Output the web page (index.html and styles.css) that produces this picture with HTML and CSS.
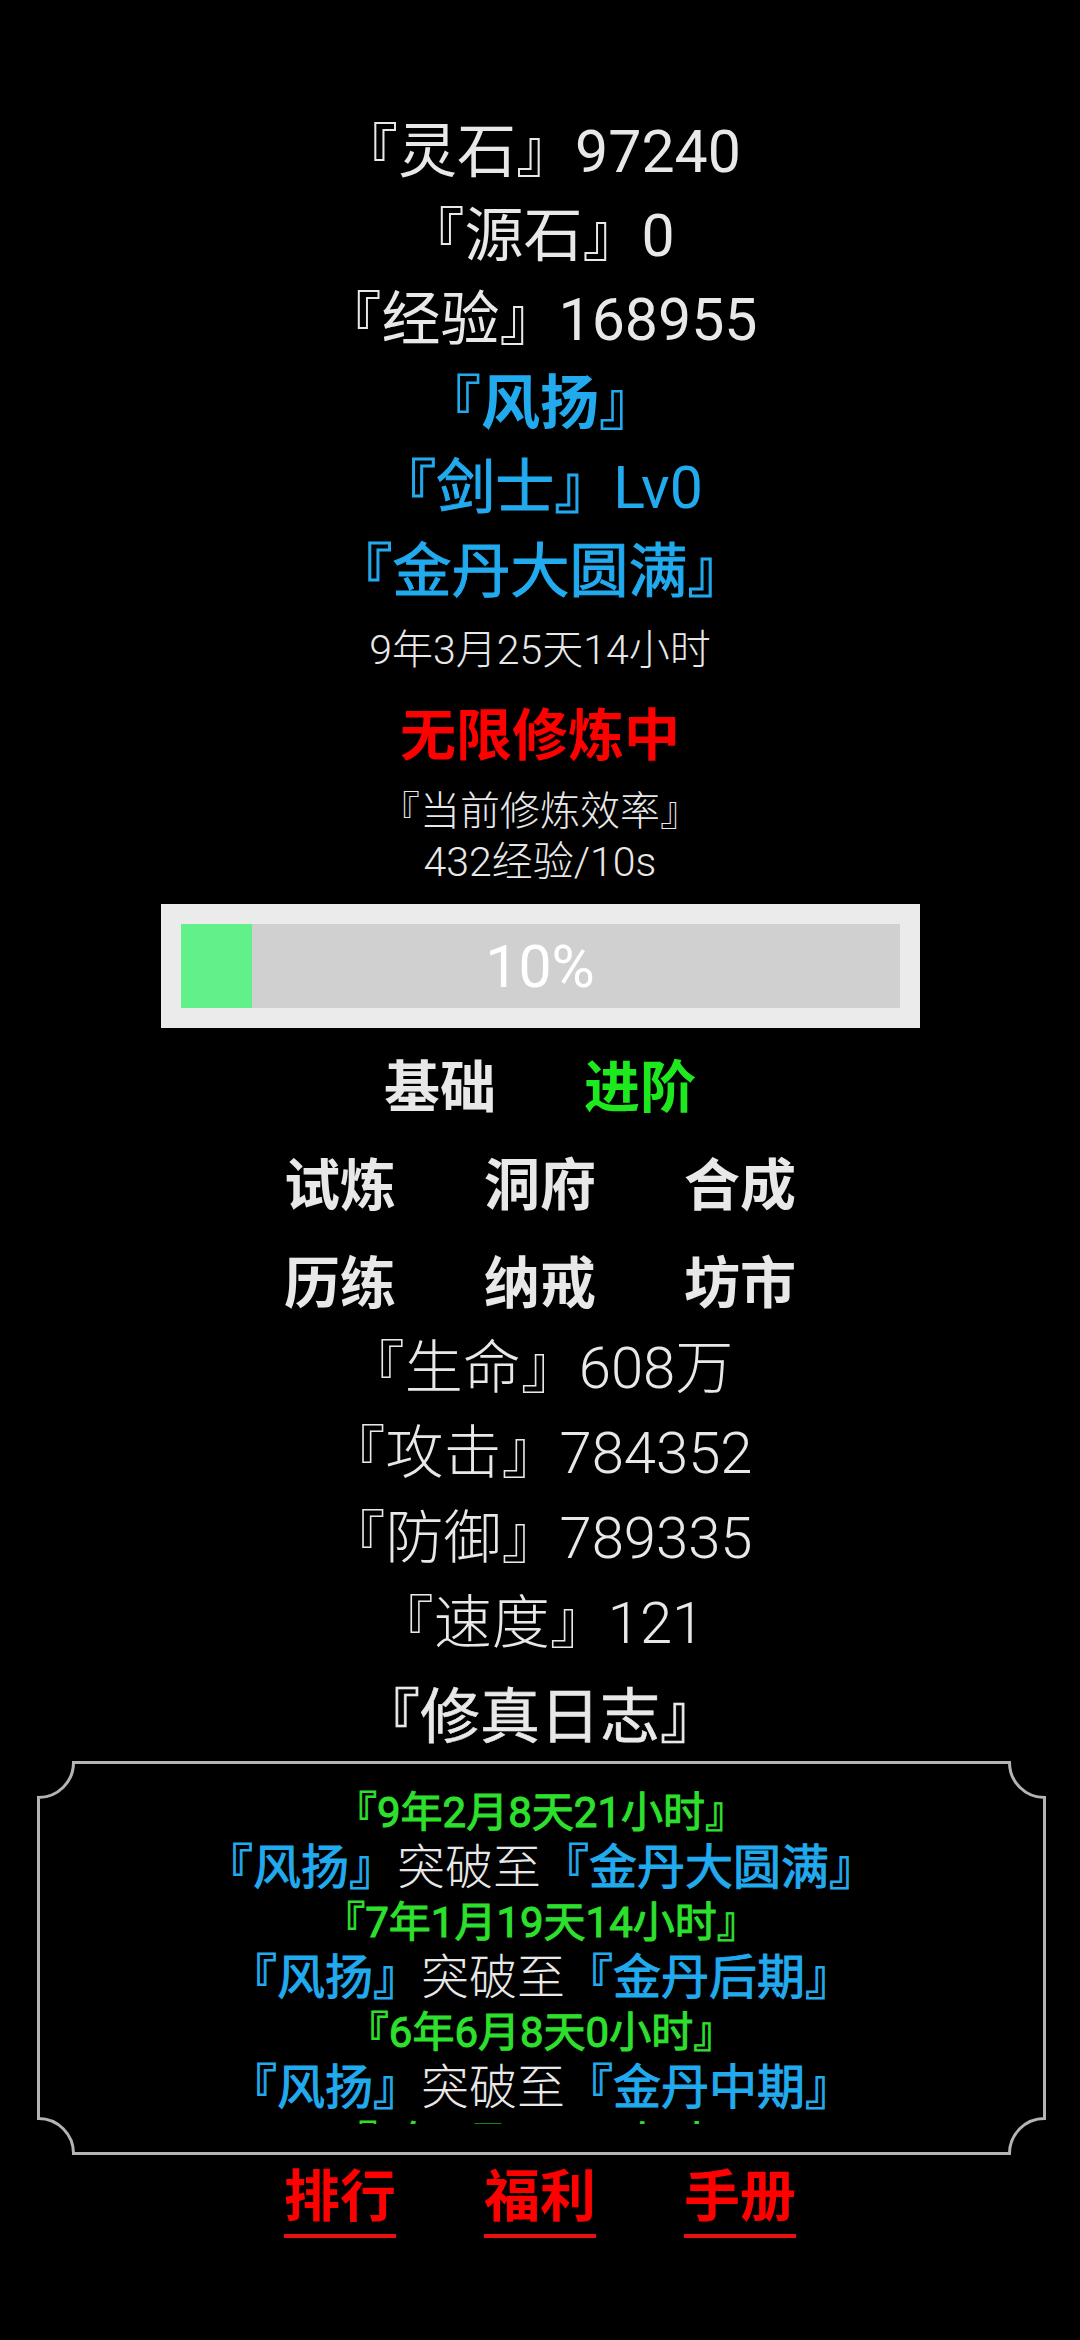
FILE: index.html
```html
<!DOCTYPE html>
<html lang="zh-CN">
<head>
<meta charset="utf-8">
<title>修真</title>
<link rel="stylesheet" href="styles.css">
</head>
<body>
<main class="page">
  <section class="profile">
    <div class="line">『灵石』97240</div>
    <div class="line">『源石』0</div>
    <div class="line">『经验』168955</div>
    <div class="line blue bold">『风扬』</div>
    <div class="line blue"><span class="medium">『剑士』</span>Lv0</div>
    <div class="line blue medium">『金丹大圆满』</div>
    <div class="age">9年3月25天14小时</div>
  </section>

  <section class="cultivate">
    <div class="status">无限修炼中</div>
    <div class="rate-title">『当前修炼效率』</div>
    <div class="rate">432经验/10s</div>
    <div class="bar">
      <div class="track">
        <div class="fill" style="width:10%"></div>
        <div class="pct">10%</div>
      </div>
    </div>
  </section>

  <nav class="menu">
    <div class="row">
      <span class="item">基础</span>
      <span class="item green">进阶</span>
    </div>
    <div class="row">
      <span class="item">试炼</span>
      <span class="item">洞府</span>
      <span class="item">合成</span>
    </div>
    <div class="row">
      <span class="item">历练</span>
      <span class="item">纳戒</span>
      <span class="item">坊市</span>
    </div>
  </nav>

  <section class="stats">
    <div class="stat">『生命』608万</div>
    <div class="stat">『攻击』784352</div>
    <div class="stat">『防御』789335</div>
    <div class="stat">『速度』121</div>
  </section>

  <h2 class="log-title">『修真日志』</h2>

  <section class="log">
    <svg class="frame" width="1009" height="394" viewBox="0 0 1009 394" aria-hidden="true">
      <path d="M36.5 1.5 H972.5 A35 35 0 0 0 1007.5 36.5 V357.5 A35 35 0 0 0 972.5 392.5 H36.5 A35 35 0 0 0 1.5 357.5 V36.5 A35 35 0 0 0 36.5 1.5 Z" fill="none" stroke="#b4b4b4" stroke-width="3"/>
    </svg>
    <div class="log-body">
      <div class="entry date">『9年2月8天21小时』</div>
      <div class="entry"><b class="blue">『风扬』</b>突破至<b class="blue">『金丹大圆满』</b></div>
      <div class="entry date">『7年1月19天14小时』</div>
      <div class="entry"><b class="blue">『风扬』</b>突破至<b class="blue">『金丹后期』</b></div>
      <div class="entry date">『6年6月8天0小时』</div>
      <div class="entry"><b class="blue">『风扬』</b>突破至<b class="blue">『金丹中期』</b></div>
      <div class="entry date">『5年4月2天13小时』</div>
      <div class="entry"><b class="blue">『风扬』</b>突破至<b class="blue">『金丹初期』</b></div>
    </div>
  </section>

  <nav class="bottom">
    <span class="link">排行</span>
    <span class="link">福利</span>
    <span class="link">手册</span>
  </nav>
</main>
</body>
</html>
```

FILE: styles.css
```css
* { box-sizing: border-box; }

html, body {
  margin: 0;
  padding: 0;
  background: #000;
}

body {
  width: 1080px;
  min-height: 2340px;
  font-family: Roboto, "Noto Sans CJK SC", sans-serif;
  color: #e8e8e8;
}

.page {
  display: flex;
  flex-direction: column;
  align-items: center;
  text-align: center;
  padding-top: 110px;
}

.profile {
  display: flex;
  flex-direction: column;
  align-items: center;
}

.line {
  font-size: 59px;
  line-height: 84px;
  height: 84px;
  white-space: nowrap;
}

.blue { color: #22aaee; }
.bold { font-weight: 700; }
.medium {
  font-weight: 400;
  -webkit-text-stroke: 1px currentColor;
}
.green { color: #1ee81e; }

.age {
  font-size: 41px;
  font-weight: 300;
  line-height: 72px;
  height: 72px;
}

.cultivate {
  display: flex;
  flex-direction: column;
  align-items: center;
}

.status {
  color: #f00;
  font-size: 56px;
  font-weight: 700;
  line-height: 100px;
  height: 100px;
}

.rate-title {
  font-size: 40px;
  font-weight: 300;
  line-height: 52px;
  height: 52px;
}

.rate {
  font-size: 41px;
  font-weight: 300;
  line-height: 48px;
  height: 48px;
}

.bar {
  margin-top: 18px;
  width: 759px;
  height: 124px;
  padding: 20px;
  background: #ebebeb;
}

.track {
  position: relative;
  height: 84px;
  background: #d0d0d0;
}

.fill {
  height: 100%;
  background: #62f08a;
}

.pct {
  position: absolute;
  inset: 0;
  display: flex;
  align-items: center;
  justify-content: center;
  color: #fff;
  font-size: 59px;
  line-height: 1;
}

.menu {
  margin-top: 18px;
  display: flex;
  flex-direction: column;
  gap: 14px;
}

.row {
  display: flex;
  justify-content: center;
  gap: 88px;
}

.item {
  font-size: 56px;
  font-weight: 700;
  line-height: 84px;
  height: 84px;
}

.stats {
  display: flex;
  flex-direction: column;
  align-items: center;
}

.stat {
  font-size: 58px;
  font-weight: 300;
  line-height: 85px;
  height: 85px;
  white-space: nowrap;
}

.log-title {
  margin: 9px 0 0;
  font-size: 60px;
  font-weight: 400;
  -webkit-text-stroke: 0.6px currentColor;
  line-height: 86px;
  height: 86px;
}

.log {
  position: relative;
  width: 1009px;
  height: 394px;
  margin-left: 2px;
  padding: 24px 0 20px;
}

.frame {
  position: absolute;
  left: 0;
  top: 0;
  display: block;
}

.log-body {
  height: 339px;
  overflow: hidden;
}

.entry {
  font-size: 48px;
  font-weight: 300;
  line-height: 55px;
  height: 55px;
  white-space: nowrap;
  color: #e8e8e8;
}

.entry b {
  font-weight: 400;
  -webkit-text-stroke: 1px currentColor;
}

.entry.date {
  color: #2ee02e;
  font-size: 42px;
  font-weight: 400;
  -webkit-text-stroke: 1px currentColor;
}

.bottom {
  display: flex;
  justify-content: center;
  gap: 88px;
}

.link {
  color: #f00;
  font-size: 56px;
  font-weight: 700;
  padding-top: 5px;
  line-height: 74px;
  height: 83px;
  border-bottom: 4px solid #e81010;
}
```
